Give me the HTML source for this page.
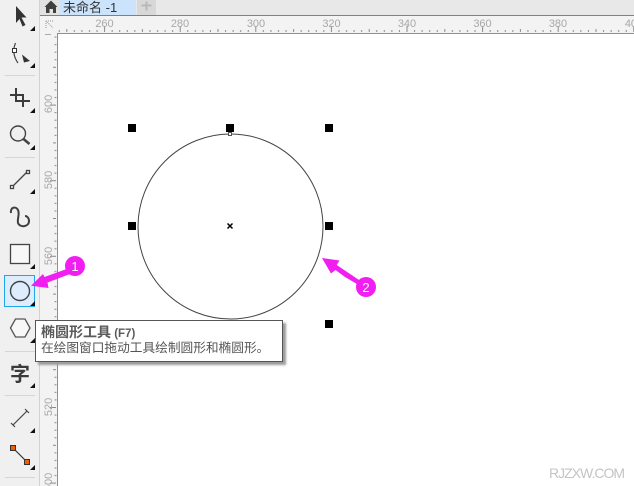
<!DOCTYPE html>
<html><head><meta charset="utf-8"><style>
html,body{margin:0;padding:0;width:634px;height:486px;overflow:hidden;background:#fff}
svg{position:absolute;left:0;top:0}
text{font-family:"Liberation Sans","Noto Sans CJK SC",sans-serif}
.r{font-size:11px;fill:#a8a8a8;text-anchor:middle}
#tip{position:absolute;left:35px;top:320px;width:246px;height:40px;background:#fff;border:1px solid #555;box-sizing:content-box;box-shadow:3px 3px 2px #9c9c9c;font-family:"Liberation Sans","Noto Sans CJK SC",sans-serif;color:#555}
#tip div{position:absolute;left:5px;white-space:nowrap}
</style></head><body>
<svg width="634" height="486" viewBox="0 0 634 486">
<defs>
<pattern id="tx" patternUnits="userSpaceOnUse" x="104.1" y="0" width="75.6" height="40">
<rect x="0" y="26" width="1" height="6" fill="#8a8a8a"/>
<rect x="7.56" y="30" width="1" height="2" fill="#8a8a8a"/><rect x="15.12" y="30" width="1" height="2" fill="#8a8a8a"/><rect x="22.68" y="30" width="1" height="2" fill="#8a8a8a"/><rect x="30.24" y="30" width="1" height="2" fill="#8a8a8a"/>
<rect x="37.8" y="29" width="1" height="3" fill="#8a8a8a"/>
<rect x="45.36" y="30" width="1" height="2" fill="#8a8a8a"/><rect x="52.92" y="30" width="1" height="2" fill="#8a8a8a"/><rect x="60.48" y="30" width="1" height="2" fill="#8a8a8a"/><rect x="68.04" y="30" width="1" height="2" fill="#8a8a8a"/>
</pattern>
<pattern id="ty" patternUnits="userSpaceOnUse" x="0" y="104.6" width="60" height="75.6">
<rect y="0" x="50" width="6" height="1" fill="#8a8a8a"/>
<rect y="7.56" x="54.5" width="2" height="1" fill="#8a8a8a"/><rect y="15.12" x="54.5" width="2" height="1" fill="#8a8a8a"/><rect y="22.68" x="54.5" width="2" height="1" fill="#8a8a8a"/><rect y="30.24" x="54.5" width="2" height="1" fill="#8a8a8a"/>
<rect y="37.8" x="53" width="3" height="1" fill="#8a8a8a"/>
<rect y="45.36" x="54.5" width="2" height="1" fill="#8a8a8a"/><rect y="52.92" x="54.5" width="2" height="1" fill="#8a8a8a"/><rect y="60.48" x="54.5" width="2" height="1" fill="#8a8a8a"/><rect y="68.04" x="54.5" width="2" height="1" fill="#8a8a8a"/>
</pattern>
</defs>

<!-- toolbar -->
<rect x="0" y="0" width="39" height="486" fill="#f0f0f0"/>
<rect x="39" y="0" width="1" height="486" fill="#d2d2d2"/>
<!-- tab bar -->
<rect x="40" y="0" width="594" height="15" fill="#e8e8e8"/>
<rect x="40" y="0" width="20" height="15" fill="#e2e2e2"/>
<rect x="60" y="0" width="76" height="15" fill="#cce4fb"/>
<rect x="137" y="0" width="19" height="15" fill="#d8d8d8"/>
<rect x="40" y="15" width="594" height="1" fill="#1ea0e6"/>
<path d="M44.500 7 L51 0.500 L57.500 7 L56 7 L56 13 L53 13 L53 9 L49.500 9 L49.500 13 L46 13 L46 7 Z" fill="#3f3f3f"/>
<text x="63" y="12" font-size="13" fill="#333">未命名 -1</text>
<path d="M146.500 1.500V10.500M141.500 5.500H151.500" stroke="#b8b8b8" stroke-width="2" fill="none"/>

<!-- rulers -->
<rect x="40" y="16" width="594" height="17" fill="#f3f3f3"/>
<rect x="40" y="16" width="17" height="470" fill="#f3f3f3"/>
<rect x="57" y="16" width="577" height="17" fill="url(#tx)"/>
<rect x="40" y="33" width="17" height="453" fill="url(#ty)"/>
<rect x="57" y="33" width="577" height="1" fill="#8f8f8f"/>
<rect x="57" y="33" width="1" height="453" fill="#8f8f8f"/>
<text class="r" x="104.500" y="27">260</text>
<text class="r" x="180" y="27">280</text>
<text class="r" x="256" y="27">300</text>
<text class="r" x="331.500" y="27">320</text>
<text class="r" x="407" y="27">340</text>
<text class="r" x="482.500" y="27">360</text>
<text class="r" x="558" y="27">380</text>
<text class="r" x="634" y="27">400</text>
<text class="r" transform="translate(52 104) rotate(-90)">600</text>
<text class="r" transform="translate(52 180) rotate(-90)">580</text>
<text class="r" transform="translate(52 256) rotate(-90)">560</text>
<text class="r" transform="translate(52 407) rotate(-90)">520</text>
<text class="r" transform="translate(52 482) rotate(-90)">500</text>
<path d="M46 21H53M46 21V28M47 22L53 28" stroke="#999" stroke-width="1" stroke-dasharray="1 1" fill="none"/>
<path d="M45 34.500H51" stroke="#aaa" stroke-width="1" fill="none"/>

<!-- canvas shapes -->
<circle cx="230.500" cy="226.500" r="92.500" fill="none" stroke="#444" stroke-width="1"/>
<g fill="#000">
<rect x="128" y="124" width="8" height="8"/><rect x="226" y="124" width="8" height="8"/><rect x="325" y="124" width="8" height="8"/>
<rect x="128" y="222" width="8" height="8"/><rect x="325" y="222" width="8" height="8"/>
<rect x="325" y="320" width="8" height="8"/>
</g>
<rect x="228.500" y="132.500" width="3" height="3" fill="#fff" stroke="#555" stroke-width="1"/>
<path d="M227.500 223.500L232.500 228.500M232.500 223.500L227.500 228.500" stroke="#000" stroke-width="1.500" fill="none"/>

<!-- toolbar separators -->
<g fill="#d6d6d6">
<rect x="5" y="75" width="30" height="1"/><rect x="5" y="157" width="30" height="1"/><rect x="5" y="351" width="30" height="1"/><rect x="5" y="395" width="30" height="1"/><rect x="5" y="477" width="30" height="1"/>
</g>
<!-- selected -->
<rect x="4.500" y="275.500" width="30" height="31" fill="#deedfd" stroke="#1ea7ee" stroke-width="1"/>
<!-- corner triangles -->
<g fill="#111">
<path d="M35 26V31H30Z"/><path d="M35 63V68H30Z"/><path d="M35 108V113H30Z"/><path d="M35 145V150H30Z"/><path d="M35 189V194H30Z"/><path d="M35 264V269H30Z"/><path d="M35 301V306H30Z"/><path d="M35 338V343H30Z"/><path d="M35 383V388H30Z"/><path d="M35 428V433H30Z"/><path d="M35 465V470H30Z"/>
</g>
<!-- pick -->
<path d="M16 6 L26.500 17.500 L21.500 17.500 L25.500 25 L22.500 26.500 L19.500 19 L16 23 Z" fill="#333"/>
<!-- shape -->
<path d="M15.500 43 C13 49 13 56 18 63" fill="none" stroke="#444" stroke-width="1.200"/>
<rect x="12.500" y="48.500" width="4" height="4" fill="#fff" stroke="#333" stroke-width="1"/>
<path d="M22 54.500 L30 61 L24 62.500 Z" fill="#333"/>
<!-- crop -->
<path d="M16 88V101H30M10 95H23V107" fill="none" stroke="#3c3c3c" stroke-width="2"/>
<!-- zoom -->
<circle cx="18" cy="133.500" r="7.500" fill="none" stroke="#444" stroke-width="1.400"/>
<path d="M23.500 139L29.500 144" stroke="#444" stroke-width="2.600" fill="none"/>
<!-- freehand -->
<path d="M13 186L27 172" stroke="#444" stroke-width="1.300" fill="none"/>
<rect x="10.500" y="185.500" width="3" height="3" fill="#fff" stroke="#444" stroke-width="1.300"/>
<rect x="26.500" y="170.500" width="3" height="3" fill="#fff" stroke="#444" stroke-width="1.300"/>
<!-- artistic -->
<path d="M11 213 C10 207 16 206 18 210 C20 214 17 219 18 223 C20 228 29 227 29 221 C29 218 27 216 25 216" fill="none" stroke="#3f3f3f" stroke-width="2"/>
<!-- rect -->
<rect x="10.500" y="244.500" width="19" height="19" fill="#f8f8f8" stroke="#444" stroke-width="1.300"/>
<!-- ellipse -->
<circle cx="20" cy="291" r="9.500" fill="none" stroke="#444" stroke-width="1.400"/>
<!-- polygon -->
<path d="M10.500 328 L15.500 319 L25 319 L30 328 L25 337 L15.500 337 Z" fill="#f8f8f8" stroke="#555" stroke-width="1.300"/>
<!-- text tool -->
<text x="20" y="381" font-size="20" font-weight="bold" text-anchor="middle" fill="#3a3a3a" style="font-family:'Noto Sans CJK SC',sans-serif">字</text>
<!-- dimension -->
<path d="M13 425L27 411" stroke="#444" stroke-width="1.200" fill="none"/>
<path d="M11 423L15 427M25 409L29 413" stroke="#444" stroke-width="1.200" fill="none"/>
<!-- connector -->
<path d="M14 449L26 461" stroke="#333" stroke-width="1.200" fill="none"/>
<rect x="10.500" y="445.500" width="5" height="5" fill="#f06000" stroke="#333" stroke-width="1"/>
<rect x="24.500" y="459.500" width="5" height="5" fill="#f06000" stroke="#333" stroke-width="1"/>

<!-- watermark -->
<text x="549" y="478" font-size="14" fill="#c4c4c4" textLength="76">RJZXW.COM</text>

<!-- arrows -->
<path d="M31 285.700 L43 274 L44.500 277 L68 268.500 L70 274 L47.500 282.500 L48.500 288 Z" fill="#f01ef0"/>
<circle cx="75" cy="266" r="10" fill="#f01ef0"/>
<text x="75" y="271" font-size="13" fill="#fff" text-anchor="middle">1</text>
<path d="M322 258 L339.500 260.500 L336.700 265 L359 280 L357 284 L345 277 L335.500 270 L331 273.500 Z" fill="#f01ef0"/>
<circle cx="366" cy="287" r="10" fill="#f01ef0"/>
<text x="366" y="292" font-size="13" fill="#fff" text-anchor="middle">2</text>
</svg>
<div id="tip">
<div style="top:3px;font-size:14px;font-weight:bold;line-height:16px;color:#5a5a5a">椭圆形工具<span style="font-size:11.500px"> (F7)</span></div>
<div style="top:19px;font-size:12.700px;line-height:17px">在绘图窗口拖动工具绘制圆形和椭圆形。</div>
</div>
</body></html>
